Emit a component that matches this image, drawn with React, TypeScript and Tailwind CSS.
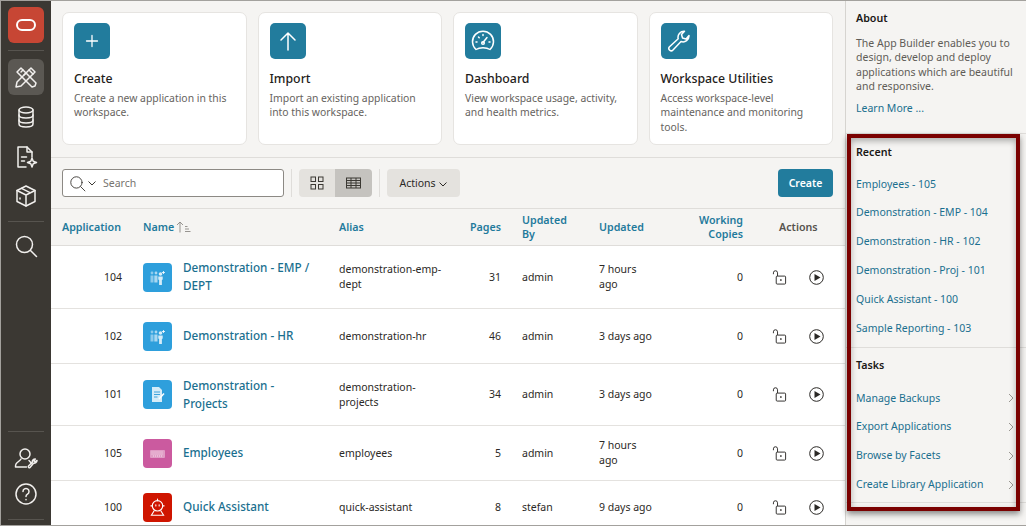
import type { ReactNode } from "react";

const FONT = "font-['Noto_Sans','Open_Sans',sans-serif]";
const GRID = "grid grid-cols-[81px_196px_108px_54px_98px_81px_63px_1fr]";

function Svg({ size, children, sw = 1.5, className = "" }: { size: number; children: ReactNode; sw?: number; className?: string }) {
  return (
    <svg width={size} height={size} viewBox="0 0 24 24" fill="none" stroke="currentColor" strokeWidth={sw} strokeLinecap="round" strokeLinejoin="round" className={className}>
      {children}
    </svg>
  );
}

const IconBuilder = () => (
  <Svg size={24} sw={1.5}>
    <path d="M3 7l4-4 15 15-1 3-3 1z" />
    <path d="M7 7l2-2M10 10l2-2" />
    <path d="M21 7l-4-4L3 17l-1 5 5-1z" />
    <path d="M15 5l4 4" />
  </Svg>
);
const IconDb = () => (
  <Svg size={24} sw={1.5}>
    <ellipse cx="12" cy="5" rx="7" ry="3" />
    <path d="M5 5v14c0 1.700 3.100 3 7 3s7-1.300 7-3V5" />
    <path d="M5 10c0 1.700 3.100 3 7 3s7-1.300 7-3M5 15c0 1.700 3.100 3 7 3s7-1.300 7-3" />
  </Svg>
);
const IconFile = () => (
  <Svg size={24} sw={1.5}>
    <path d="M12 22H4V2h9l5 5v5" />
    <path d="M13 2v5h5" />
    <path d="M7.500 12h5M7.500 16h3" />
    <path d="M18 13l1.200 3.300 3.300 1.200-3.300 1.200L18 22l-1.200-3.300-3.300-1.200 3.300-1.200z" />
  </Svg>
);
const IconBox = () => (
  <Svg size={24} sw={1.5}>
    <path d="M12 2l9 4.500v11L12 22l-9-4.500v-11z" />
    <path d="M3 6.500l9 4.500 9-4.500M12 11v11M7.500 4.300l9 4.500" />
    <path d="M6 14v1" />
  </Svg>
);
const IconSearch = ({ size = 24, sw = 1.5 }: { size?: number; sw?: number }) => (
  <Svg size={size} sw={sw}>
    <circle cx="10.500" cy="10.500" r="8" />
    <path d="M16.500 16.500l6 6" />
  </Svg>
);
const IconUserWrench = () => (
  <Svg size={24} sw={1.5}>
    <circle cx="11" cy="7" r="5" />
    <path d="M7 12c-1 2-4 3-5 5-.5 1-.5 3-.5 3h11" />
    <path d="M15 13.500c1 1 2 2.200 2.500 3" />
    <path d="M23 13.500c0 2-2 3-3.500 2.700L16 20.500c-.8.800-2.200-.5-1.500-1.500l3.800-3.800c-.4-1.700 1-3.200 3-3.200l-1.500 1.800 1.200 1z" />
  </Svg>
);
const IconHelp = () => (
  <Svg size={24} sw={1.5}>
    <circle cx="12" cy="12" r="10" />
    <path d="M9 9.500a3 3 0 1 1 4.500 2.600c-1 .6-1.500 1.100-1.500 2.400" />
    <path d="M12 17.500v.2" />
  </Svg>
);
const IconGauge = () => (
  <Svg size={24} sw={1.5}>
    <path d="M5 20.500a10.500 10.500 0 1 1 14 0c-1.500-1-4-1.800-7-1.800s-5.500.8-7 1.800z" />
    <path d="M12 13.500l4-5" />
    <circle cx="12" cy="14" r="1.300" />
    <path d="M5 13h1M18 13h1M7.500 8l.7.700M12 5.500v1" />
  </Svg>
);
const IconWrench = () => (
  <Svg size={24} sw={1.5}>
    <path d="M22 6.500a6 6 0 0 1-8 6L6 21a2.300 2.300 0 0 1-3.500-3.200l8.700-8a6 6 0 0 1 6.300-7.500l-3 3.200 1 3.500 3.500 1z" />
  </Svg>
);
const IconPeople = () => (
  <svg width="17" height="17" viewBox="0 0 17 17" fill="#fff" fillOpacity="0.8">
    <circle cx="3" cy="4" r="1.400" fillOpacity="0.45" />
    <circle cx="7" cy="4" r="1.400" fillOpacity="0.6" />
    <circle cx="11.500" cy="5" r="1.800" />
    <path d="M1.500 6.500h3v7h-3z" fillOpacity="0.45" />
    <path d="M5.300 6.500h3.200v7H5.300z" fillOpacity="0.6" />
    <path d="M9.300 7.500h4.400v3l-.8.500V16h-2.800v-5l-.8-.5z" />
    <path d="M14.500 2v3M13 3.500h3" stroke="#fff" strokeWidth="0.8" />
  </svg>
);
const IconDoc = () => (
  <svg width="19" height="19" viewBox="0 0 19 19">
    <path d="M4 2h7l3 3v12H4z" fill="#fff" fillOpacity="0.8" />
    <path d="M6 7h6M6 9.500h6M6 12h3.500" stroke="#2e9bd8" strokeWidth="0.9" />
    <path d="M11 14l5-5.500" stroke="#fff" strokeWidth="1.500" />
  </svg>
);
const IconKeyboard = () => (
  <svg width="17" height="17" viewBox="0 0 17 17">
    <rect x="1" y="5" width="15" height="8" rx="1" fill="#fff" fillOpacity="0.4" />
    <path d="M2.500 7h12M2.500 9h12M4 11h9" stroke="#fff" strokeOpacity="0.8" strokeWidth="0.8" strokeDasharray="1 1" />
  </svg>
);
const IconRobot = () => (
  <svg width="21" height="21" viewBox="0 0 19 19" fill="none" stroke="#fff" strokeWidth="1" strokeLinecap="round">
    <circle cx="9.500" cy="8" r="4.700" />
    <path d="M8 7v1.200M11 7v1.200M3.500 8h1.300M14.200 8h1.300M9.500 1.800v1.500" />
    <path d="M6.500 12.500L4 16.500h11l-2.500-4" />
  </svg>
);
const IconLock = () => (
  <svg width="15" height="15" viewBox="0 0 16 16" fill="none" stroke="#2b2926" strokeWidth="1">
    <rect x="4.500" y="6.500" width="10" height="8.500" rx="1" />
    <path d="M1.500 4.500V3a2.200 2.200 0 0 1 4.400 0v3.500" />
    <circle cx="9.500" cy="10.700" r="0.500" fill="#2b2926" />
  </svg>
);
const IconPlay = () => (
  <svg width="15" height="15" viewBox="0 0 15 15" fill="none" stroke="#2b2926" strokeWidth="1">
    <circle cx="7.500" cy="7.500" r="6.800" />
    <path d="M5.500 4v7l6-3.500z" fill="#2b2926" stroke="none" />
  </svg>
);

const CARDS = [
  { title: "Create", text: "Create a new application in this workspace.", icon: <Svg size={22} sw={1.4}><path d="M12 6v12M6 12h12" /></Svg> },
  { title: "Import", text: "Import an existing application into this workspace.", icon: <Svg size={24} sw={1.5}><path d="M12 21V4M5 11l7-7 7 7" /></Svg> },
  { title: "Dashboard", text: "View workspace usage, activity, and health metrics.", icon: <IconGauge /> },
  { title: "Workspace Utilities", text: "Access workspace-level maintenance and monitoring tools.", icon: <IconWrench /> },
];

const ROWS = [
  { id: 104, name: "Demonstration - EMP / DEPT", alias: "demonstration-emp-dept", pages: 31, by: "admin", updated: "7 hours ago", color: "bg-[#2e9fdc]", icon: <IconPeople />, h: "h-[63px]" },
  { id: 102, name: "Demonstration - HR", alias: "demonstration-hr", pages: 46, by: "admin", updated: "3 days ago", color: "bg-[#2e9fdc]", icon: <IconPeople />, h: "h-[55px]" },
  { id: 101, name: "Demonstration - Projects", alias: "demonstration-projects", pages: 34, by: "admin", updated: "3 days ago", color: "bg-[#2e9fdc]", icon: <IconDoc />, h: "h-[62px]" },
  { id: 105, name: "Employees", alias: "employees", pages: 5, by: "admin", updated: "7 hours ago", color: "bg-[#cb5a9f]", icon: <IconKeyboard />, h: "h-[55px]" },
  { id: 100, name: "Quick Assistant", alias: "quick-assistant", pages: 8, by: "stefan", updated: "9 days ago", color: "bg-[#cf1500]", icon: <IconRobot />, h: "h-[53px]" },
];

const RECENT = ["Employees - 105", "Demonstration - EMP - 104", "Demonstration - HR - 102", "Demonstration - Proj - 101", "Quick Assistant - 100", "Sample Reporting - 103"];
const TASKS = ["Manage Backups", "Export Applications", "Browse by Facets", "Create Library Application"];

function Sidebar() {
  return (
    <nav className="w-[50px] shrink-0 bg-[#3b3833] text-[#f1efed] flex flex-col items-center pt-[6px]">
      <div className="size-9 rounded-[6px] bg-[#c74634] flex items-center justify-center">
        <div className="w-[20px] h-[12px] rounded-[6px] border-[2px] border-white" />
      </div>
      <div className="w-9 h-px bg-[#57544f] mt-[7px] mb-[8px]" />
      <div className="size-9 rounded-[6px] bg-[#5b5853] flex items-center justify-center"><IconBuilder /></div>
      <div className="h-[40px] mt-[2px] flex items-center"><IconDb /></div>
      <div className="h-[39px] flex items-center"><IconFile /></div>
      <div className="h-[40px] flex items-center"><IconBox /></div>
      <div className="w-9 h-px bg-[#57544f] mt-[5px]" />
      <div className="h-[48px] flex items-center"><IconSearch /></div>
      <div className="flex-1" />
      <div className="w-9 h-px bg-[#57544f]" />
      <div className="h-[50px] pt-[4px] flex items-center"><IconUserWrench /></div>
      <div className="h-[24px] flex items-center"><IconHelp /></div>
      <div className="w-9 h-px bg-[#57544f] mt-[13px] mb-[5px]" />
    </nav>
  );
}

function Toolbar() {
  return (
    <div className="h-[51px] shrink-0 border-b border-[#dfddda] flex items-center pl-[11px] pr-[12px]">
      <div className="w-[222px] h-[28px] bg-white border border-[#8c8984] rounded-[3px] flex items-center pl-[6px] text-[#3b3833]">
        <IconSearch size={17} sw={1.300} />
        <svg width="10" height="10" viewBox="0 0 10 10" fill="none" stroke="currentColor" strokeWidth="1" className="ml-[1px]"><path d="M1.500 3.500L5 7l3.500-3.500" /></svg>
        <span className="ml-[6px] pt-[2px] text-[10.500px] text-[#77746f]">Search</span>
      </div>
      <div className="w-px h-[28px] bg-[#dfddda] ml-[7px] mr-[7px]" />
      <div className="flex h-[28px] rounded-[4px] overflow-hidden text-[#3b3833]">
        <div className="w-[36px] bg-[#e4e2de] flex items-center justify-center">
          <svg width="14" height="14" viewBox="0 0 14 14" fill="none" stroke="currentColor" strokeWidth="1"><rect x="1" y="1" width="4.500" height="4.500" /><rect x="8.500" y="1" width="4.500" height="4.500" /><rect x="1" y="8.500" width="4.500" height="4.500" /><rect x="8.500" y="8.500" width="4.500" height="4.500" /></svg>
        </div>
        <div className="w-[37px] bg-[#c5c3bf] flex items-center justify-center">
          <svg width="15" height="12" viewBox="0 0 15 12" fill="none" stroke="currentColor" strokeWidth="1"><rect x="0.500" y="1" width="14" height="10" /><path d="M0.500 3.500h14M0.500 6h14M0.500 8.500h14M5 1v10M10 1v10" /></svg>
        </div>
      </div>
      <div className="w-px h-[28px] bg-[#dfddda] ml-[7px] mr-[7px]" />
      <div className="w-[73px] h-[28px] pt-[1px] bg-[#e4e2de] rounded-[4px] flex items-center justify-center gap-[2px] text-[10.500px] text-[#2b2926]">
        Actions
        <svg width="10" height="10" viewBox="0 0 10 10" fill="none" stroke="currentColor" strokeWidth="1"><path d="M1.500 3.500L5 7l3.500-3.500" /></svg>
      </div>
      <div className="flex-1" />
      <div className="w-[55px] h-[28px] pt-[1px] bg-[#227c9d] rounded-[4px] flex items-center justify-center text-[10.500px] font-semibold text-white">Create</div>
    </div>
  );
}

function AppTable() {
  const head = "text-[10.700px] leading-[14px] font-semibold text-[#1f7a9c]";
  return (
    <div className="flex-1 min-h-0 overflow-hidden">
      <div className={`${GRID} h-[37px] pl-[11px] items-center border-b border-[#dfddda] ${head}`}>
        <span>Application</span>
        <span className="flex items-center gap-[2px]">
          Name
          <svg width="15" height="12" viewBox="0 0 15 12" fill="none" stroke="#8c8984" strokeWidth="0.900"><path d="M4 11.500V1M1 4l3-3 3 3M9 5.500h2.500M9 8h4M9 10.500h5.500" /></svg>
        </span>
        <span>Alias</span>
        <span className="text-right">Pages</span>
        <span className="pl-[21px] w-[70px]">Updated By</span>
        <span>Updated</span>
        <span className="text-right">Working Copies</span>
        <span className="pl-[36px] text-[#55524d]">Actions</span>
      </div>
      <div className="bg-white">
        {ROWS.map((r) => (
          <div key={r.id} className={`${GRID} ${r.h} pl-[11px] items-center border-b border-[#e4e2df] text-[10.500px] leading-[15px] text-[#2b2926]`}>
            <span className="pr-[21px] text-right">{r.id}</span>
            <div className="flex items-center">
              <div className={`size-[29px] shrink-0 rounded-[4px] ${r.color} flex items-center justify-center`}>{r.icon}</div>
              <span className="ml-[11px] mb-[2px] w-[134px] text-[11.700px] leading-[18px] font-medium text-[#1a6f8f]">{r.name}</span>
            </div>
            <span className="break-words">{r.alias}</span>
            <span className="text-right">{r.pages}</span>
            <span className="pl-[21px]">{r.by}</span>
            <span className="w-[54px]">{r.updated}</span>
            <span className="text-right">0</span>
            <div className="flex items-center pl-[29px] gap-[22px]"><IconLock /><IconPlay /></div>
          </div>
        ))}
      </div>
    </div>
  );
}

function SideHeading({ children, className = "" }: { children: ReactNode; className?: string }) {
  return <h3 className={`text-[10.700px] leading-[14px] font-semibold text-[#1a1816] ${className}`}>{children}</h3>;
}

function RightPanel() {
  return (
    <aside className="w-[181px] shrink-0 border-l border-[#d6d4d0] bg-[#f5f4f2] text-[10.500px] text-[#1a6f8f]">
      <div className="h-[133px] border-b border-[#dfddda] pl-[10px] pr-[12px] pt-[10px]">
        <SideHeading>About</SideHeading>
        <p className="mt-[11px] leading-[14.400px] text-[#5f5c57]">The App Builder enables you to design, develop and deploy applications which are beautiful and responsive.</p>
        <p className="mt-[7px] leading-[14px]">Learn More ...</p>
      </div>
      <div className="h-[214px] border-b border-[#dfddda] pl-[10px] pt-[11px]">
        <SideHeading>Recent</SideHeading>
        <ul className="mt-[11px]">
          {RECENT.map((t) => <li key={t} className="h-[28.800px] flex items-center">{t}</li>)}
        </ul>
      </div>
      <div className="h-[155px] border-b border-[#dfddda] pl-[10px] pt-[10px]">
        <SideHeading>Tasks</SideHeading>
        <ul className="mt-[12px]">
          {TASKS.map((t) => (
            <li key={t} className="h-[28.800px] flex items-center justify-between pr-[11px]">
              {t}
              <svg width="8" height="10" viewBox="0 0 8 10" fill="none" stroke="#9a9792" strokeWidth="1"><path d="M2 1l4 4-4 4" /></svg>
            </li>
          ))}
        </ul>
      </div>
    </aside>
  );
}

export default function App() {
  return (
    <div className={`${FONT} relative w-[1026px] h-[526px] overflow-hidden flex bg-[#f5f4f2] border-t border-b border-l border-[#a3a19d]`}>
      <Sidebar />
      <main className="flex-1 min-w-0 flex flex-col">
        <div className="h-[157px] shrink-0 border-b border-[#dfddda] pl-[11px] pr-[12px] pt-[11px] grid grid-cols-4 gap-[11px]">
          {CARDS.map((c) => (
            <div key={c.title} className="h-[133px] bg-white border border-[#e6e4e1] rounded-[7px] pl-[11px] pr-[10px] pt-[10px]">
              <div className="size-9 rounded-[5px] bg-[#227c9d] flex items-center justify-center text-white">{c.icon}</div>
              <div className="mt-[11px] text-[12.300px] leading-[18px] font-medium text-[#1f1d1b]">{c.title}</div>
              <p className="mt-[3px] text-[10.400px] leading-[14.400px] text-[#66635e]">{c.text}</p>
            </div>
          ))}
        </div>
        <Toolbar />
        <AppTable />
      </main>
      <RightPanel />
      <div className="absolute left-[846px] top-[133px] w-[173px] h-[377px] border-[4px] border-[#7a0000] shadow-[0_3px_6px_rgba(0,0,0,0.45),inset_0_3px_6px_rgba(0,0,0,0.3)]" />
    </div>
  );
}
